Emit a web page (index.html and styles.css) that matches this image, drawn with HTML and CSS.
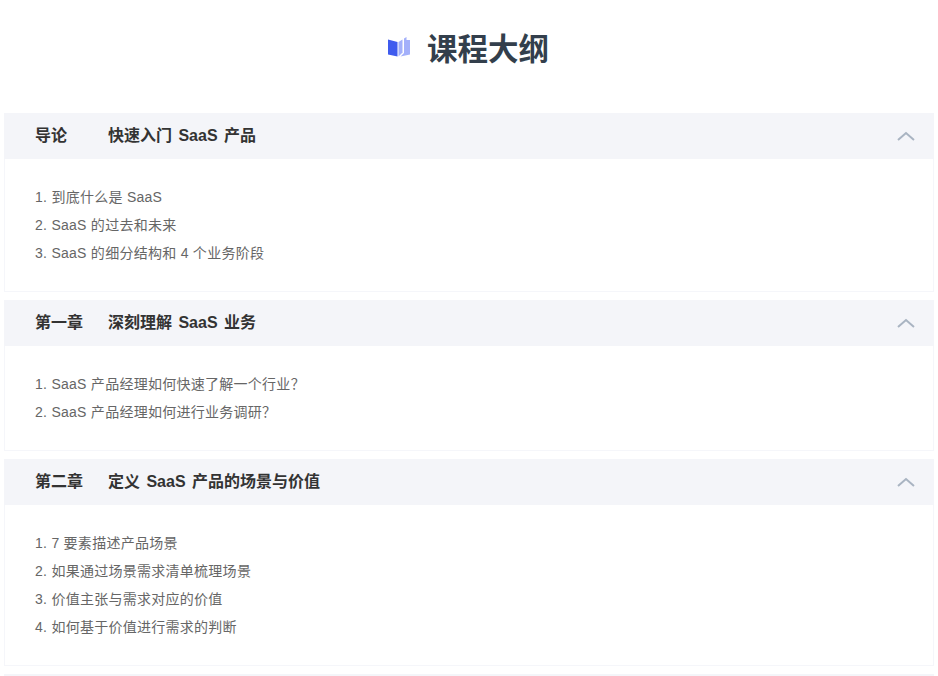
FILE: index.html
```html
<!DOCTYPE html>
<html lang="zh-CN">
<head>
<meta charset="utf-8">
<title>课程大纲</title>
<link rel="stylesheet" href="styles.css">
</head>
<body>
<h1 class="title">
  <svg class="title-icon" width="22" height="20" viewBox="0 0 22 20">
    <path class="book-left" d="M0 2.5 L9.5 5 V19.5 L0 17.5 Z"/>
    <path class="book-right" d="M10.5 5 L14.5 2.5 V15.5 L10.5 19.5 Z"/>
    <path class="book-right" d="M16 1.5 L18.5 0 V3 H22 V17.5 L12.5 19.5 L16 16 Z"/>
  </svg>
  <span>课程大纲</span>
</h1>
<section class="panel">
  <header class="panel-head"><span class="chapter">导论</span><span class="name">快速入门 SaaS 产品</span>
    <svg class="chev" width="18" height="10" viewBox="0 0 18 10"><path d="M1 9 L9 2 L17 9"/></svg></header>
  <ol class="items">
    <li>1. 到底什么是 SaaS</li>
    <li>2. SaaS 的过去和未来</li>
    <li>3. SaaS 的细分结构和 4 个业务阶段</li>
  </ol>
</section>
<section class="panel">
  <header class="panel-head"><span class="chapter">第一章</span><span class="name">深刻理解 SaaS 业务</span>
    <svg class="chev" width="18" height="10" viewBox="0 0 18 10"><path d="M1 9 L9 2 L17 9"/></svg></header>
  <ol class="items">
    <li>1. SaaS 产品经理如何快速了解一个行业？</li>
    <li>2. SaaS 产品经理如何进行业务调研？</li>
  </ol>
</section>
<section class="panel">
  <header class="panel-head"><span class="chapter">第二章</span><span class="name">定义 SaaS 产品的场景与价值</span>
    <svg class="chev" width="18" height="10" viewBox="0 0 18 10"><path d="M1 9 L9 2 L17 9"/></svg></header>
  <ol class="items">
    <li>1. 7 要素描述产品场景</li>
    <li>2. 如果通过场景需求清单梳理场景</li>
    <li>3. 价值主张与需求对应的价值</li>
    <li>4. 如何基于价值进行需求的判断</li>
  </ol>
</section>
<div class="next-edge"></div>
</body>
</html>
```

FILE: styles.css
```css
html, body { margin: 0; padding: 0; height: 676px; overflow: hidden; background: #fff; }
body { padding: 0 4px; box-sizing: border-box; font-family: "Liberation Sans", "Noto Sans CJK SC", sans-serif; }
.title {
  margin: 0; height: 113px; padding: 0 1px 20px 0; box-sizing: border-box;
  display: flex; align-items: center; justify-content: center; gap: 17px;
  font-size: 30.5px; font-weight: 700; color: #333f4c;
}
.title-icon { display: block; }
.book-left { fill: #3f5bee; }
.book-right { fill: #a3b0fa; }
.panel { border: 1px solid #f5f6fa; border-top: 0; margin-bottom: 8px; background: #fff; }
.panel-head {
  height: 46px; margin: 0 -1px; padding: 0 19px 0 31px; background: #f4f5f9;
  display: flex; align-items: center; font-size: 16px; font-weight: 700; color: #333;
}
.chapter { width: 73px; margin-bottom: 4px; }
.name { flex: 1; word-spacing: 2px; margin-bottom: 4px; }
.chev { fill: none; stroke: #a9b4c2; stroke-width: 2; }
.items { list-style: none; margin: 0; padding: 24px 30px; font-size: 14px; line-height: 28px; color: #666; letter-spacing: 0.27px; }
.next-edge { height: 2px; background: #f4f5f9; }
```
